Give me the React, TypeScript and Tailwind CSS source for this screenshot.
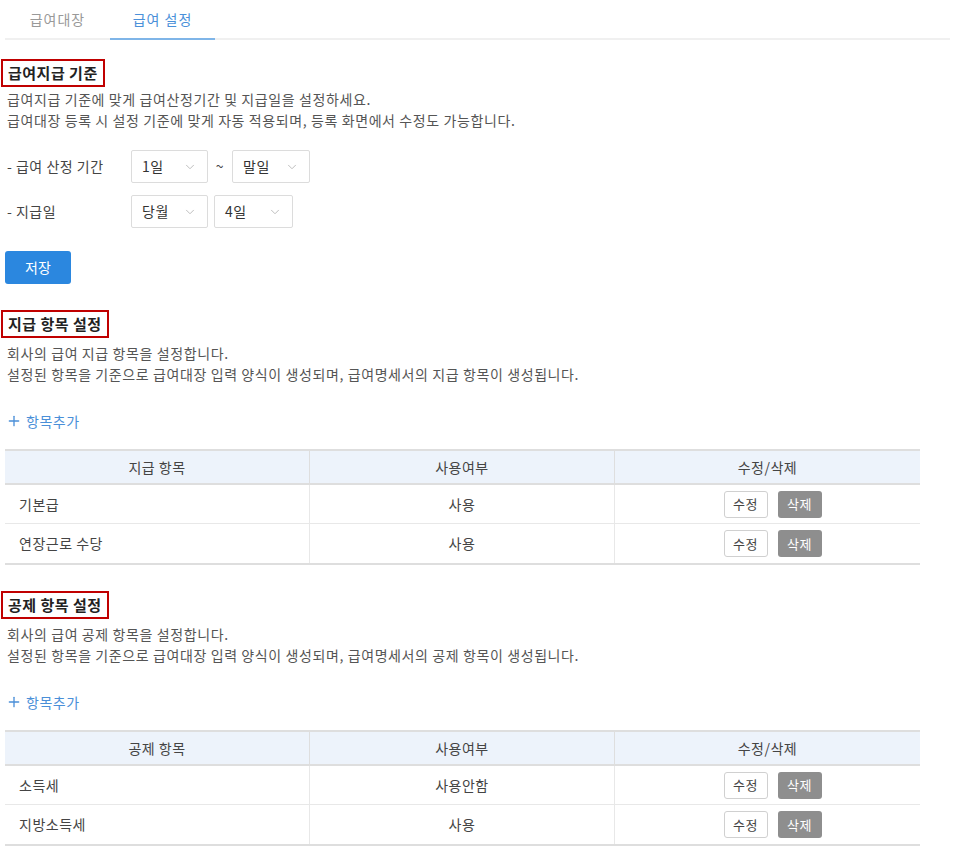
import { ChevronDown, Plus } from "lucide-react";

const font = {
  fontFamily: '"Noto Sans CJK KR", "Noto Sans", sans-serif',
};

interface Item {
  name: string;
  use: string;
}

function Select({ value, width }: { value: string; width: string }) {
  return (
    <div
      className={`flex h-[33px] ${width} items-center justify-between rounded-[2px] border border-[#dcdcdc] bg-white pl-[10px] pr-[10px] text-[14px] tracking-[0.5px] text-[#333]`}
    >
      <span>{value}</span>
      <ChevronDown className="h-[14px] w-[14px] text-[#b5b5b5]" strokeWidth={1.5} />
    </div>
  );
}

function SectionTitle({ children }: { children: string }) {
  return (
    <div className="ml-[-4px] inline-flex h-[28px] items-center border-2 border-[#c00000] px-[5px] text-[15px] font-bold tracking-[0.5px] text-[#222]">
      {children}
    </div>
  );
}

function Desc({ lines }: { lines: string[] }) {
  return (
    <div className="pl-[2px] text-[14px] leading-[21px] tracking-[0.6px] text-[#555]">
      {lines.map((l) => (
        <div key={l}>{l}</div>
      ))}
    </div>
  );
}

function ItemTable({ title, items }: { title: string; items: Item[] }) {
  return (
    <div className="w-[915px] border-t-2 border-b-2 border-[#dedede] text-[14px] tracking-[0.5px] text-[#444]">
      <div className="grid h-[34px] grid-cols-3 border-b-2 border-[#dedede] bg-[#edf3fb]">
        <div className="flex items-center justify-center border-r border-[#dedede]">{title}</div>
        <div className="flex items-center justify-center border-r border-[#dedede]">사용여부</div>
        <div className="flex items-center justify-center">수정/삭제</div>
      </div>
      {items.map((it, i) => (
        <div
          key={it.name}
          className={`grid h-[39px] grid-cols-3 ${i < items.length - 1 ? "border-b border-[#e8e8e8]" : ""}`}
        >
          <div className="flex items-center border-r border-[#e8e8e8] pl-[14px]">{it.name}</div>
          <div className="flex items-center justify-center border-r border-[#e8e8e8]">{it.use}</div>
          <div className="flex items-center justify-center gap-[10px] pl-[10px]">
            <button className="h-[27px] w-[44px] rounded-[3px] border border-[#d0d0d0] bg-white text-[13px] text-[#444]">
              수정
            </button>
            <button className="h-[27px] w-[44px] rounded-[3px] bg-[#8e8e8e] text-[13px] text-white">
              삭제
            </button>
          </div>
        </div>
      ))}
    </div>
  );
}

function AddItem() {
  return (
    <div className="flex h-[20px] items-center gap-[4px] pl-[1px] text-[14px] tracking-[0.5px] text-[#4a8fd8]">
      <Plus className="h-[16px] w-[16px]" strokeWidth={2} />
      <span>항목추가</span>
    </div>
  );
}

export default function App() {
  return (
    <div className="min-h-screen w-[963px] bg-white" style={font}>
      <div className="mx-[5px] flex h-[40px] w-[945px] border-b-2 border-[#f0f0f0]">
        <div className="flex w-[105px] items-center justify-center text-[14px] tracking-[1px] text-[#999]">
          급여대장
        </div>
        <div className="mb-[-2px] flex w-[105px] items-center justify-center border-b-2 border-[#7fb5e8] text-[14px] tracking-[1px] text-[#4a90d9]">
          급여 설정
        </div>
      </div>

      <div className="flex flex-col pl-[5px]">
        <div className="mt-[19px]">
          <SectionTitle>급여지급 기준</SectionTitle>
        </div>
        <div className="mt-[2px]">
          <Desc
            lines={[
              "급여지급 기준에 맞게 급여산정기간 및 지급일을 설정하세요.",
              "급여대장 등록 시 설정 기준에 맞게 자동 적용되며, 등록 화면에서 수정도 가능합니다.",
            ]}
          />
        </div>

        <div className="mt-[19px] flex items-center text-[14px] tracking-[0.5px] text-[#444]">
          <div className="w-[126px] pl-[2px]">- 급여 산정 기간</div>
          <Select value="1일" width="w-[77px]" />
          <span className="w-[24px] text-center">~</span>
          <Select value="말일" width="w-[78px]" />
        </div>
        <div className="mt-[12px] flex items-center gap-[6px] text-[14px] tracking-[0.5px] text-[#444]">
          <div className="w-[120px] pl-[2px]">- 지급일</div>
          <Select value="당월" width="w-[77px]" />
          <Select value="4일" width="w-[79px]" />
        </div>

        <div className="mt-[23px]">
          <button className="h-[33px] w-[66px] rounded-[3px] bg-[#2b87df] text-[14px] text-white">저장</button>
        </div>

        <div className="mt-[26px]">
          <SectionTitle>지급 항목 설정</SectionTitle>
        </div>
        <div className="mt-[5px]">
          <Desc
            lines={[
              "회사의 급여 지급 항목을 설정합니다.",
              "설정된 항목을 기준으로 급여대장 입력 양식이 생성되며, 급여명세서의 지급 항목이 생성됩니다.",
            ]}
          />
        </div>
        <div className="mt-[26px]">
          <AddItem />
        </div>
        <div className="mt-[18px]">
          <ItemTable
            title="지급 항목"
            items={[
              { name: "기본급", use: "사용" },
              { name: "연장근로 수당", use: "사용" },
            ]}
          />
        </div>

        <div className="mt-[26px]">
          <SectionTitle>공제 항목 설정</SectionTitle>
        </div>
        <div className="mt-[5px]">
          <Desc
            lines={[
              "회사의 급여 공제 항목을 설정합니다.",
              "설정된 항목을 기준으로 급여대장 입력 양식이 생성되며, 급여명세서의 공제 항목이 생성됩니다.",
            ]}
          />
        </div>
        <div className="mt-[26px]">
          <AddItem />
        </div>
        <div className="mt-[18px]">
          <ItemTable
            title="공제 항목"
            items={[
              { name: "소득세", use: "사용안함" },
              { name: "지방소득세", use: "사용" },
            ]}
          />
        </div>
      </div>
    </div>
  );
}
